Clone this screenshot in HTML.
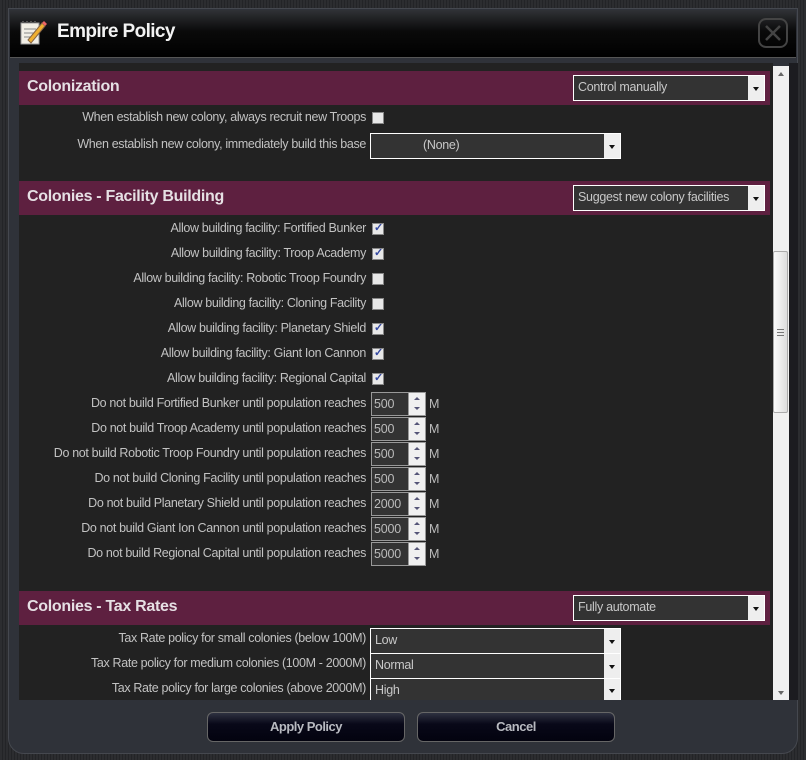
<!DOCTYPE html>
<html><head><meta charset="utf-8"><style>
*{margin:0;padding:0;box-sizing:border-box}
body{width:806px;height:760px;background:#2a2b2e;position:relative;overflow:hidden;font-family:"Liberation Sans",sans-serif;color:#c4c4c4}
.a{position:absolute}
.frame{left:0;top:0;width:806px;height:760px;background:repeating-linear-gradient(90deg,#2c2d30 0,#2c2d30 2px,#232427 2px,#232427 3px)}
.win{left:8px;top:8px;width:790px;height:746px;background:#2f3239;border-radius:0 0 16px 16px;border:1px solid #45484f}
.title{left:10px;top:10px;width:786px;height:48px;background:linear-gradient(#303236,#0a0a0a 45%,#000);border-bottom:1px solid #555}
.tt{left:57px;top:21px;font-size:19px;font-weight:bold;color:#f2f2f2;letter-spacing:-0.6px}
.content{left:19px;top:63px;width:754px;height:637px;background:#222222}
.rs{left:789px;top:63px;width:9px;height:637px;background:#1c1c20}
.hdr{left:19px;width:751px;height:34px;background:#5e2040}
.ht{left:27px;font-size:16px;font-weight:bold;color:#e6e0e4;letter-spacing:-0.3px}
.lbl{right:440px;font-size:12.5px;letter-spacing:-0.35px;white-space:nowrap;color:#c2c2c2}
.cb{left:372px;width:12px;height:12px;background:#e8e8e8;border:1px solid #888}
.cb.on::after{content:"✓";position:absolute;left:1px;top:-3px;font-size:11px;color:#3347a0;font-weight:bold}
.sel{background:#333;border:1px solid #fff;font-size:12.5px;letter-spacing:-0.3px;color:#c8c8c8;padding:4px 4px}
.sel .ar{position:absolute;right:0;top:0;bottom:0;width:16px;background:#eee}
.sel .ar::after{content:"";position:absolute;left:5px;top:50%;margin-top:-1px;border:3px solid transparent;border-top:4px solid #111;border-bottom:0}
.sp{left:371px;width:55px;height:24px;background:#333;border:1px solid #999;font-size:12.5px;color:#bbb;padding:4px 2px;letter-spacing:-0.2px}
.sp .b{position:absolute;right:0;top:0;width:17px;height:22px;background:#f0f0f0;border-left:1px solid #999}
.sp .b::before{content:"";position:absolute;left:5px;top:4px;border:3px solid transparent;border-bottom:3px solid #557;border-top:0}
.sp .b::after{content:"";position:absolute;left:5px;top:14px;border:3px solid transparent;border-top:3px solid #557;border-bottom:0}
.m{left:429px;font-size:12.5px;color:#bbb}
.btn{top:712px;width:198px;height:30px;border-radius:6px;border:1px solid #666;background:linear-gradient(#2e3140,#080818 40%,#03030f);color:#b8bac0;font-weight:bold;font-size:13px;text-align:center;line-height:28px;letter-spacing:-0.5px}
</style></head><body>
<div class="a frame"></div>
<div class="a win"></div>
<div class="a title"></div>
<svg class="a" style="left:18px;top:18px" width="30" height="30" viewBox="0 0 30 30"><rect x="3" y="5" width="18" height="21" fill="#f2efe6" stroke="#999"/><g stroke="#888" stroke-width="1"><line x1="6" y1="11" x2="18" y2="11"/><line x1="6" y1="15" x2="18" y2="15"/><line x1="6" y1="19" x2="18" y2="19"/></g><path d="M4 4h16" stroke="#555" stroke-width="2" stroke-dasharray="2 2"/><path d="M10 22 L24 5 L27 8 L13 25 Z" fill="#f0b030" stroke="#864"/><path d="M24 5 L26 3 L29 6 L27 8Z" fill="#e66"/></svg>
<div class="a tt">Empire Policy</div>
<svg class="a" style="left:758px;top:18px" width="30" height="30"><rect x="1" y="1" width="28" height="28" rx="7" fill="none" stroke="#444" stroke-width="2"/><path d="M8 8L22 22M22 8L8 22" stroke="#444" stroke-width="2.5"/></svg>
<div class="a content"></div>
<div class="a rs"></div>
<div class="a" style="left:773px;top:66px;width:16px;height:634px;background:#f0f0f0"></div>
<div class="a" style="left:773px;top:251px;width:15px;height:162px;background:linear-gradient(90deg,#fafafa,#ddd);border:1px solid #aaa;border-radius:2px"></div>
<div class="a" style="left:777px;top:329px;width:7px;height:7px;border-top:1px solid #777;border-bottom:1px solid #777"><div style="margin-top:2px;height:1px;background:#777"></div></div>
<div class="a" style="left:778px;top:72px;border:3px solid transparent;border-bottom:4px solid #666;border-top:0"></div>
<div class="a" style="left:778px;top:691px;border:3px solid transparent;border-top:4px solid #666;border-bottom:0"></div>

<div class="a hdr" style="top:71px"></div><div class="a ht" style="top:78px">Colonization</div>
<div class="a sel" style="left:573px;top:75px;width:192px;height:26px">Control manually<span class="ar"></span></div>
<div class="a lbl" style="top:110px">When establish new colony, always recruit new Troops</div><div class="a cb" style="top:112px"></div>
<div class="a lbl" style="top:137px">When establish new colony, immediately build this base</div>
<div class="a sel" style="left:370px;top:133px;width:251px;height:26px;padding-left:52px">(None)<span class="ar"></span></div>

<div class="a hdr" style="top:181px"></div><div class="a ht" style="top:188px">Colonies - Facility Building</div>
<div class="a sel" style="left:573px;top:185px;width:192px;height:26px">Suggest new colony facilities<span class="ar"></span></div>

<div class="a lbl" style="top:221px">Allow building facility: Fortified Bunker</div><div class="a cb on" style="top:223px"></div>
<div class="a lbl" style="top:246px">Allow building facility: Troop Academy</div><div class="a cb on" style="top:248px"></div>
<div class="a lbl" style="top:271px">Allow building facility: Robotic Troop Foundry</div><div class="a cb" style="top:273px"></div>
<div class="a lbl" style="top:296px">Allow building facility: Cloning Facility</div><div class="a cb" style="top:298px"></div>
<div class="a lbl" style="top:321px">Allow building facility: Planetary Shield</div><div class="a cb on" style="top:323px"></div>
<div class="a lbl" style="top:346px">Allow building facility: Giant Ion Cannon</div><div class="a cb on" style="top:348px"></div>
<div class="a lbl" style="top:371px">Allow building facility: Regional Capital</div><div class="a cb on" style="top:373px"></div>

<div class="a lbl" style="top:396px">Do not build Fortified Bunker until population reaches</div><div class="a sp" style="top:392px">500<span class="b"></span></div><div class="a m" style="top:397px">M</div>
<div class="a lbl" style="top:421px">Do not build Troop Academy until population reaches</div><div class="a sp" style="top:417px">500<span class="b"></span></div><div class="a m" style="top:422px">M</div>
<div class="a lbl" style="top:446px">Do not build Robotic Troop Foundry until population reaches</div><div class="a sp" style="top:442px">500<span class="b"></span></div><div class="a m" style="top:447px">M</div>
<div class="a lbl" style="top:471px">Do not build Cloning Facility until population reaches</div><div class="a sp" style="top:467px">500<span class="b"></span></div><div class="a m" style="top:472px">M</div>
<div class="a lbl" style="top:496px">Do not build Planetary Shield until population reaches</div><div class="a sp" style="top:492px">2000<span class="b"></span></div><div class="a m" style="top:497px">M</div>
<div class="a lbl" style="top:521px">Do not build Giant Ion Cannon until population reaches</div><div class="a sp" style="top:517px">5000<span class="b"></span></div><div class="a m" style="top:522px">M</div>
<div class="a lbl" style="top:546px">Do not build Regional Capital until population reaches</div><div class="a sp" style="top:542px">5000<span class="b"></span></div><div class="a m" style="top:547px">M</div>

<div class="a hdr" style="top:591px"></div><div class="a ht" style="top:598px">Colonies - Tax Rates</div>
<div class="a sel" style="left:573px;top:595px;width:192px;height:26px">Fully automate<span class="ar"></span></div>
<div class="a lbl" style="top:631px">Tax Rate policy for small colonies (below 100M)</div>
<div class="a sel" style="left:370px;top:628px;width:251px;height:26px">Low<span class="ar"></span></div>
<div class="a lbl" style="top:656px">Tax Rate policy for medium colonies (100M - 2000M)</div>
<div class="a sel" style="left:370px;top:653px;width:251px;height:26px">Normal<span class="ar"></span></div>
<div class="a lbl" style="top:681px">Tax Rate policy for large colonies (above 2000M)</div>
<div class="a sel" style="left:370px;top:678px;width:251px;height:22px;border-bottom:none">High<span class="ar"></span></div>

<div class="a btn" style="left:207px">Apply Policy</div>
<div class="a btn" style="left:417px">Cancel</div>
</body></html>
